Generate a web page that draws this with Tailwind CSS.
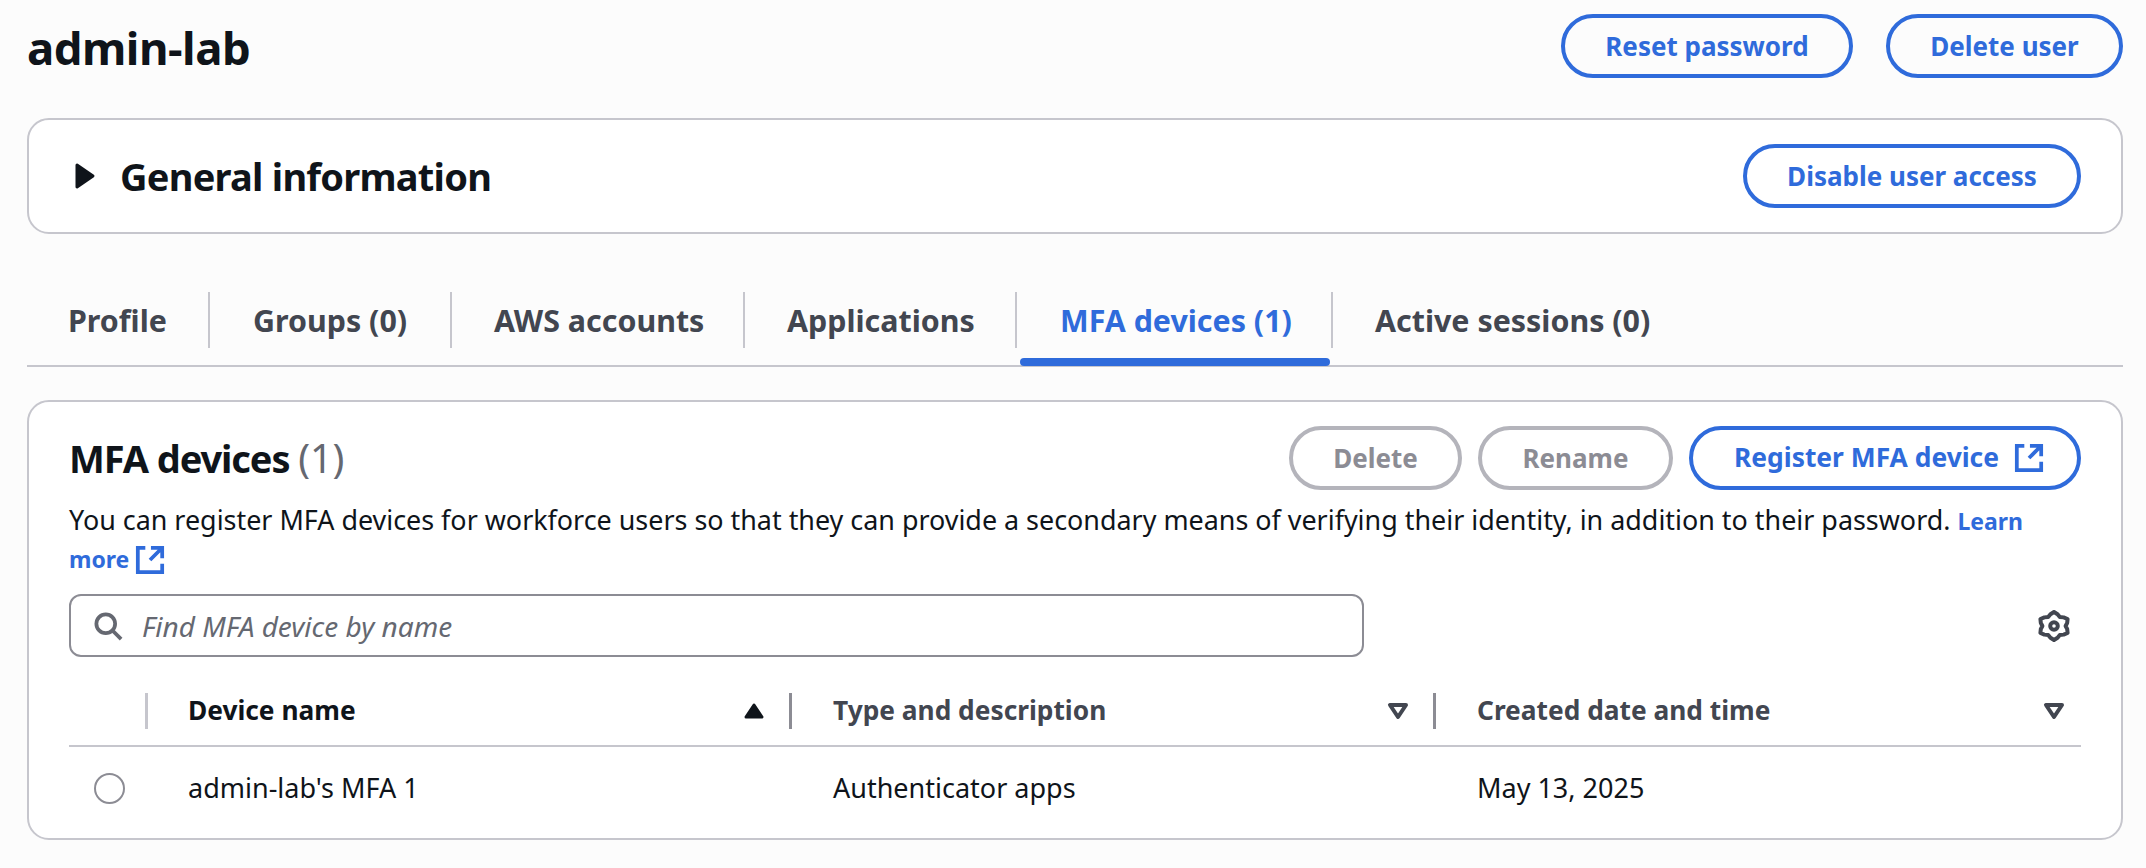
<!DOCTYPE html>
<html lang="en">
<head>
  <meta charset="UTF-8" />
  <title>admin-lab</title>
  <script src="https://cdn.jsdelivr.net/npm/@tailwindcss/browser@4"></script>
</head>
<body class="bg-[#fcfcfc] text-[#0f141a] font-['Noto_Sans',sans-serif] overflow-hidden">
  <div class="w-[2146px] h-[868px] pl-[27px] pr-[23px]">
    <!-- Page header -->
    <div class="h-[92px] pt-[14px] flex justify-between items-start">
      <h1 class="text-[45.5px] leading-[66px] font-bold tracking-[-0.5px]">admin-lab</h1>
      <div class="flex gap-[33px]">
        <button class="h-[64px] w-[292px] rounded-full border-[4px] border-[#2f6bdb] text-[#2f6bdb] text-[26px] font-bold">Reset password</button>
        <button class="h-[64px] w-[237px] rounded-full border-[4px] border-[#2f6bdb] text-[#2f6bdb] text-[26px] font-bold">Delete user</button>
      </div>
    </div>

    <!-- General information -->
    <div class="mt-[26px] h-[116px] bg-white border-[2px] border-[#c6c6cd] rounded-[22px] flex items-center justify-between pl-[44px] pr-[40px]">
      <div class="flex items-center gap-[23px]">
        <svg class="w-[24px] h-[28px]" viewBox="0 0 24 28"><path d="M4 3 L20 14 L4 25 Z" fill="#0f141a" stroke="#0f141a" stroke-width="3" stroke-linejoin="round"/></svg>
        <h2 class="text-[38px] font-bold leading-[50px] tracking-[-0.75px]">General information</h2>
      </div>
      <button class="h-[64px] w-[338px] rounded-full border-[4px] border-[#2f6bdb] text-[#2f6bdb] text-[26px] font-bold">Disable user access</button>
    </div>

    <!-- Tabs -->
    <div class="mt-[58px] h-[75px] border-b-[2px] border-[#c6c6cd] flex items-start text-[30.4px] font-bold text-[#424650]">
      <div class="w-[183px] h-[56px] pl-[41px] pt-[2px] border-r-[2px] border-[#c6c6cd] flex items-center">Profile</div>
      <div class="w-[242px] h-[56px] pl-[43px] pt-[2px] border-r-[2px] border-[#c6c6cd] flex items-center">Groups (0)</div>
      <div class="w-[293px] h-[56px] pl-[42px] pt-[2px] border-r-[2px] border-[#c6c6cd] flex items-center">AWS accounts</div>
      <div class="w-[272px] h-[56px] pl-[42px] pt-[2px] border-r-[2px] border-[#c6c6cd] flex items-center">Applications</div>
      <div class="relative w-[316px] h-[56px] pl-[43px] pt-[2px] border-r-[2px] border-[#c6c6cd] flex items-center text-[#2f6bdb]">
        MFA devices (1)
        <span class="absolute left-[3px] right-[1px] top-[66px] h-[8px] rounded-full bg-[#2f6bdb]"></span>
      </div>
      <div class="h-[56px] pl-[42px] pt-[2px] flex items-center">Active sessions (0)</div>
    </div>

    <!-- MFA devices -->
    <div class="mt-[33px] h-[440px] bg-white border-[2px] border-[#c6c6cd] rounded-[22px] px-[40px]">
      <div class="pt-[24px] flex justify-between items-start">
        <h2 class="text-[38px] font-bold leading-[64px] tracking-[-1.1px]">MFA devices <span class="text-[39.5px] font-normal text-[#656871] tracking-normal">(1)</span></h2>
        <div class="flex gap-[16px]">
          <button class="h-[64px] w-[173px] rounded-full border-[4px] border-[#b4b4bb] text-[#8c8c94] text-[26px] font-bold">Delete</button>
          <button class="h-[64px] w-[195px] rounded-full border-[4px] border-[#b4b4bb] text-[#8c8c94] text-[26px] font-bold">Rename</button>
          <button class="h-[64px] w-[392px] pl-[8px] rounded-full border-[4px] border-[#2f6bdb] text-[#2f6bdb] text-[26.4px] font-bold flex items-center justify-center gap-[15px]">
            Register MFA device
            <svg class="w-[30px] h-[30px]" viewBox="0 0 16 16" fill="none" stroke="#2f6bdb" stroke-width="2"><path d="M5.5 1.5H1.5v13h13V10M8.5 1.5h6V7M14 2L8 8"/></svg>
          </button>
        </div>
      </div>
      <p class="mt-[10px] text-[26.9px] leading-[40px] text-[#0f141a]">You can register MFA devices for workforce users so that they can provide a secondary means of verifying their identity, in addition to their password. <a class="text-[23px] font-bold text-[#2f6bdb]">Learn</a> <a class="relative top-[-3px] text-[23px] font-bold text-[#2f6bdb]">more <svg class="inline w-[30px] h-[30px] align-[-7px]" viewBox="0 0 16 16" fill="none" stroke="#2f6bdb" stroke-width="2"><path d="M5.5 1.5H1.5v13h13V10M8.5 1.5h6V7M14 2L8 8"/></svg></a></p>

      <!-- Filter -->
      <div class="mt-[12px] flex justify-between items-center">
        <div class="w-[1295px] h-[63px] border-[2px] border-[#8c8c94] rounded-[12px] flex items-center pl-[22px] gap-[19px]">
          <svg class="w-[30px] h-[30px]" viewBox="0 0 16 16" fill="none" stroke="#656871" stroke-width="2"><circle cx="6.8" cy="6.8" r="5"/><path d="M10.4 10.4l4.6 4.6"/></svg>
          <span class="italic text-[28px] text-[#656871]">Find MFA device by name</span>
        </div>
        <svg class="w-[32px] h-[32px] mr-[11px]" viewBox="0 0 16 16" fill="none" stroke="#424650" stroke-width="2" stroke-linejoin="round"><path d="M8 1L9.77 2.11L10.91 3.5L12.83 3.69L14.79 4.5L14.6 6.42L13.82 8L14.6 9.58L14.79 11.5L12.83 12.31L10.91 12.5L9.77 13.89L8 15L6.23 13.89L5.09 12.5L3.17 12.31L1.21 11.5L1.4 9.58L2.18 8L1.4 6.42L1.21 4.5L3.17 3.69L5.09 3.5L6.23 2.11Z"/><circle cx="8" cy="8" r="1.9"/></svg>
      </div>

      <!-- Table -->
      <div class="mt-[36px] grid grid-cols-[76px_644px_644px_1fr] h-[54px] border-b-[2px] border-[#c6c6cd] items-start text-[26.3px] font-bold">
        <div></div>
        <div class="h-[36px] border-l-[3px] border-[#c6c6cd] pl-[40px] pr-[24px] flex items-center justify-between">
          Device name
          <svg class="w-[22px] h-[18px]" viewBox="0 0 22 18"><path d="M11 3 L19 15 L3 15 Z" fill="#0f141a" stroke="#0f141a" stroke-width="3" stroke-linejoin="round"/></svg>
        </div>
        <div class="h-[36px] border-l-[3px] border-[#8c8c94] pl-[41px] pr-[24px] flex items-center justify-between text-[#424650]">
          Type and description
          <svg class="w-[22px] h-[18px]" viewBox="0 0 22 18"><path d="M3 3 L19 3 L11 15 Z" fill="none" stroke="#424650" stroke-width="4" stroke-linejoin="round"/></svg>
        </div>
        <div class="h-[36px] border-l-[3px] border-[#8c8c94] pl-[41px] pr-[16px] flex items-center justify-between text-[#424650]">
          Created date and time
          <svg class="w-[22px] h-[18px]" viewBox="0 0 22 18"><path d="M3 3 L19 3 L11 15 Z" fill="none" stroke="#424650" stroke-width="4" stroke-linejoin="round"/></svg>
        </div>
      </div>
      <div class="grid grid-cols-[76px_644px_644px_1fr] h-[82px] items-center text-[27px]">
        <div class="pl-[25px]"><div class="w-[31px] h-[31px] rounded-full border-[2px] border-[#8c8c94]"></div></div>
        <div class="pl-[43px]">admin-lab's MFA 1</div>
        <div class="pl-[44px]">Authenticator apps</div>
        <div class="pl-[44px]">May 13, 2025</div>
      </div>
    </div>
  </div>
</body>
</html>
